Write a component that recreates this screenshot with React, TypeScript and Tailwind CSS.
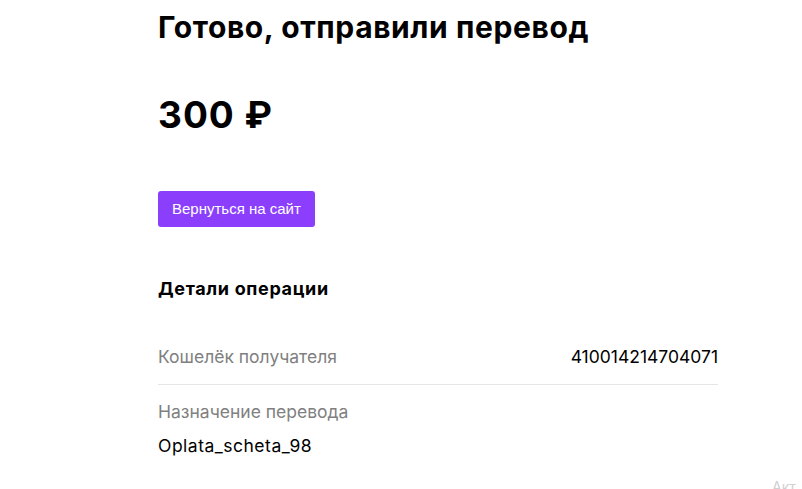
export default function App() {
  return (
    <div className="relative w-[802px] h-[489px] overflow-hidden bg-white font-['Inter',sans-serif] text-black">
      <div className="ml-[158px] w-[560px] flex flex-col">
        <h1 className="mt-[9px] text-[30px] leading-[36px] font-bold tracking-[0.6px]">Готово, отправили перевод</h1>
        <div className="mt-[48px] text-[37px] leading-[44px] font-bold tracking-[1px]">300 ₽</div>
        <button className="mt-[54px] self-start h-[36px] px-[14px] rounded-[3px] bg-[#8b3ffd] text-white text-[15px] font-['Liberation_Sans',sans-serif]">
          Вернуться на сайт
        </button>
        <h2 className="mt-[50px] text-[18px] leading-[24px] font-bold tracking-[0.65px]">Детали операции</h2>
        <div className="mt-[44px] flex justify-between items-center pb-[15px] border-b border-[#e6e6e6]">
          <span className="text-[17.5px] leading-[24px] text-[#808080]">Кошелёк получателя</span>
          <span className="text-[17.5px] leading-[24px]">410014214704071</span>
        </div>
        <div className="mt-[15px] text-[17.5px] leading-[24px] text-[#808080]">Назначение перевода</div>
        <div className="mt-[10px] text-[17.5px] leading-[24px] tracking-[0.5px]">Oplata_scheta_98</div>
      </div>
      <div className="absolute left-[772px] top-[476px] text-[14px] text-[#d0d0d0]">Акт</div>
    </div>
  );
}
